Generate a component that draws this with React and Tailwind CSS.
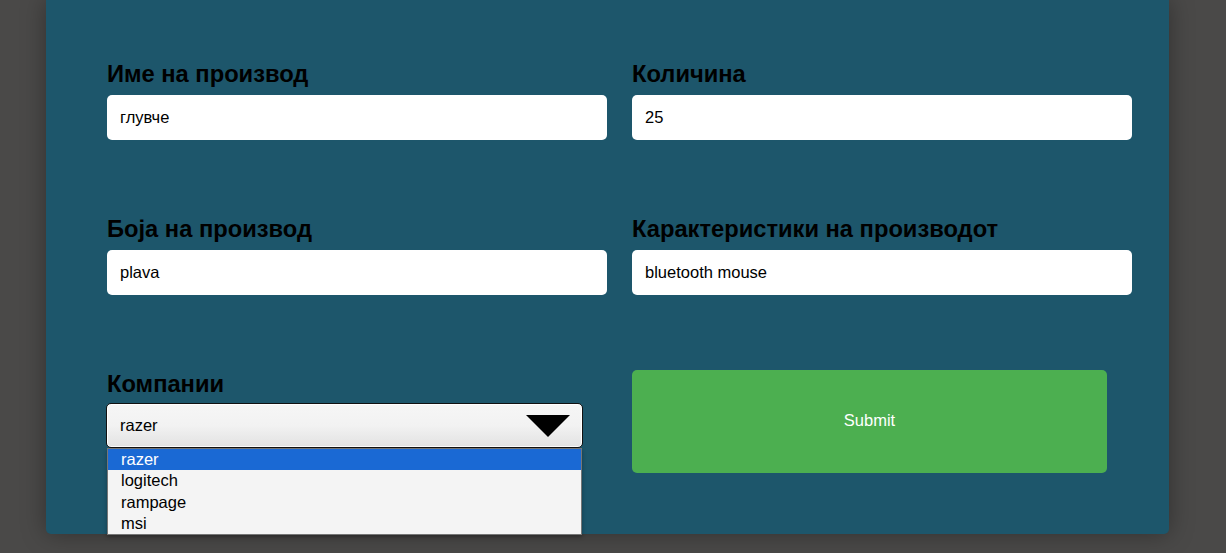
import React from "react";

const FONT = { fontFamily: '"Liberation Sans", Arial, sans-serif' };

function Field({ label, value }) {
  return (
    <div className="flex flex-col">
      <label className="text-[23.7px] font-bold leading-[27px] text-black">{label}</label>
      <input
        readOnly
        value={value}
        className="mt-[7px] h-[45px] w-[500px] rounded-[5px] bg-white px-[13px] text-[16.5px] text-black outline-none"
      />
    </div>
  );
}

const COMPANIES = ["razer", "logitech", "rampage", "msi"];

export default function App() {
  return (
    <div className="h-[553px] w-full overflow-hidden bg-[#4a4948]" style={FONT}>
      <div className="ml-[46px] h-[534px] w-[1123px] rounded-b-[5px] bg-[#1d566b] pl-[61px] pt-[61px] shadow-[0_0_24px_rgba(0,0,0,0.35)]">
        <div className="grid grid-cols-[500px_500px] gap-x-[25px] gap-y-[76px]">
          <Field label="Име на производ" value="глувче" />
          <Field label="Количина" value="25" />
          <Field label="Боја на производ" value="plava" />
          <Field label="Карактеристики на производот" value="bluetooth mouse" />

          <div className="flex flex-col">
            <label className="text-[23.7px] font-bold leading-[27px] text-black">Компании</label>
            <div className="relative mt-[5px] -ml-[1px] w-[477px]">
              <div className="flex h-[45px] items-center justify-between rounded-[5px] border-[1.5px] border-[#111] bg-gradient-to-b from-[#f6f6f6] via-[#f2f2f2] to-[#e2e2e2] pl-[13px] pr-[12px] text-[16.5px] text-black shadow-[inset_0_0_0_1px_#ffffff]">
                <span>razer</span>
                <svg width="44" height="22" viewBox="0 0 44 22">
                  <polygon points="0,0 44,0 22,22" fill="#000" />
                </svg>
              </div>
              <ul className="absolute left-[1px] top-[45px] z-10 w-[475px] border border-[#767676] bg-[#f4f4f4] text-[16.5px] leading-[21.3px] text-black shadow-[0_2px_4px_rgba(0,0,0,0.3)]">
                {COMPANIES.map((c, i) => (
                  <li
                    key={c}
                    className={i === 0 ? "bg-[#1a69d4] pl-[13px] text-white" : "pl-[13px]"}
                  >
                    {c}
                  </li>
                ))}
              </ul>
            </div>
          </div>

          <div className="-mt-[1px]">
            <button className="h-[103px] w-[475px] rounded-[5px] bg-[#4caf50] pb-[2px] text-[16.5px] text-white">
              Submit
            </button>
          </div>
        </div>
      </div>
    </div>
  );
}
